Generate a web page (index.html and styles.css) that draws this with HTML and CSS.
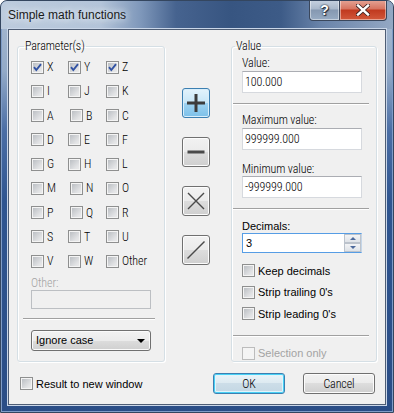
FILE: index.html
```html
<!DOCTYPE html>
<html lang="en">
<head>
    <meta charset="UTF-8">
    <title>Simple math functions</title>
    <link rel="stylesheet" href="styles.css">
</head>
<body>
<div class="window">
    <div class="titlebar">
        <span class="title">Simple math functions</span>
        <div class="caption-buttons">
            <div class="cap-btn help">?</div>
            <div class="cap-btn close">
                <svg width="14" height="12" viewBox="0 0 14 12">
                    <path d="M2 1.5 L12 10.5 M12 1.5 L2 10.5" stroke="#3a2020" stroke-width="4" stroke-linecap="square"/>
                    <path d="M2 1.5 L12 10.5 M12 1.5 L2 10.5" stroke="#fff" stroke-width="2.4" stroke-linecap="square"/>
                </svg>
            </div>
        </div>
    </div>

    <div class="client">
        <div class="main">
            <!-- parameters -->
            <fieldset class="group params">
                <legend>Parameter(s)</legend>
                <div class="letters">
                    <label class="check"><span class="box on"><svg viewBox="0 0 11 11"><path d="M2 5.2 L4.3 8 L9 2.2" /></svg></span>X</label>
                    <label class="check"><span class="box on"><svg viewBox="0 0 11 11"><path d="M2 5.2 L4.3 8 L9 2.2" /></svg></span>Y</label>
                    <label class="check"><span class="box on"><svg viewBox="0 0 11 11"><path d="M2 5.2 L4.3 8 L9 2.2" /></svg></span>Z</label>
                    <label class="check"><span class="box"></span>I</label>
                    <label class="check"><span class="box"></span>J</label>
                    <label class="check"><span class="box"></span>K</label>
                    <label class="check"><span class="box"></span>A</label>
                    <label class="check shift"><span class="box"></span>B</label>
                    <label class="check"><span class="box"></span>C</label>
                    <label class="check"><span class="box"></span>D</label>
                    <label class="check"><span class="box"></span>E</label>
                    <label class="check"><span class="box"></span>F</label>
                    <label class="check"><span class="box"></span>G</label>
                    <label class="check"><span class="box"></span>H</label>
                    <label class="check"><span class="box"></span>L</label>
                    <label class="check"><span class="box"></span>M</label>
                    <label class="check shift"><span class="box"></span>N</label>
                    <label class="check"><span class="box"></span>O</label>
                    <label class="check"><span class="box"></span>P</label>
                    <label class="check shift"><span class="box"></span>Q</label>
                    <label class="check"><span class="box"></span>R</label>
                    <label class="check"><span class="box"></span>S</label>
                    <label class="check"><span class="box"></span>T</label>
                    <label class="check"><span class="box"></span>U</label>
                    <label class="check"><span class="box"></span>V</label>
                    <label class="check"><span class="box"></span>W</label>
                    <label class="check"><span class="box"></span>Other</label>
                </div>
                <div class="other-label">Other:</div>
                <div class="field disabled other-field"></div>
                <div class="sep left-sep"></div>
                <div class="combo">Ignore case<span class="arrow"></span></div>
            </fieldset>

            <!-- operations -->
            <div class="ops">
                <button class="op hot">
                    <svg width="18" height="18" viewBox="0 0 18 18"><path d="M9 0 V18 M0 9 H18" stroke="#3c3c3c" stroke-width="3"/></svg>
                </button>
                <button class="op">
                    <svg width="18" height="18" viewBox="0 0 18 18"><path d="M0.5 9 H17.5" stroke="#4a4a4a" stroke-width="3"/></svg>
                </button>
                <button class="op">
                    <svg width="18" height="18" viewBox="0 0 18 18"><path d="M1 1 L17 17 M17 1 L1 17" stroke="#4a4a4a" stroke-width="1.4"/></svg>
                </button>
                <button class="op">
                    <svg width="18" height="18" viewBox="0 0 18 18"><path d="M0.5 17.5 L17.5 0.5" stroke="#4a4a4a" stroke-width="1.4"/></svg>
                </button>
            </div>

            <!-- value -->
            <fieldset class="group value">
                <legend>Value</legend>
                <div class="lbl first">Value:</div>
                <div class="field">100.000</div>
                <div class="sep"></div>
                <div class="lbl max">Maximum value:</div>
                <div class="field">999999.000</div>
                <div class="lbl min">Minimum value:</div>
                <div class="field">-999999.000</div>
                <div class="sep"></div>
                <div class="lbl2">Decimals:</div>
                <div class="spinner">
                    <span class="spin-text">3</span>
                    <span class="spin">
                        <span class="spin-btn"><span class="tri up"></span></span>
                        <span class="spin-btn"><span class="tri down"></span></span>
                    </span>
                </div>
                <div class="opts">
                    <label class="check wide"><span class="box"></span>Keep decimals</label>
                    <label class="check wide"><span class="box"></span>Strip trailing 0's</label>
                    <label class="check wide"><span class="box"></span>Strip leading 0's</label>
                </div>
                <div class="sep"></div>
                <label class="check wide disabled sel"><span class="box"></span>Selection only</label>
            </fieldset>
        </div>

        <div class="footer">
            <label class="check wide"><span class="box"></span>Result to new window</label>
            <button class="btn default">OK</button>
            <button class="btn">Cancel</button>
        </div>
    </div>
</div>
</body>
</html>
```

FILE: styles.css
```css
* {
    box-sizing: border-box;
}

body {
    margin: 0;
    background: #fff;
    font-family: "Liberation Sans", Arial, sans-serif;
    font-size: 11px;
    color: #000;
}

.window {
    width: 394px;
    height: 413px;
    border: 1px solid #34465f;
    border-radius: 7px 7px 0 0;
    padding: 0 7px 7px 7px;
    display: flex;
    flex-direction: column;
    overflow: hidden;
    background: linear-gradient(180deg, #a9bbd2 0, #93aac7 70px, #4b6ea5 130px, #2f5590 200px, #2a4d86 413px);
    box-shadow: inset 1px 0 0 #7f9cc7, inset -1px 0 0 #7f9cc7, inset 0 -1px 0 #7f9cc7;
}

/* title bar */
.titlebar {
    height: 28px;
    margin: 0 -7px;
    padding: 0 6px 0 7px;
    display: flex;
    justify-content: space-between;
    align-items: flex-start;
    background: linear-gradient(90deg, #bccbdd 0, #b3c4d9 100px, #7e97ba 140px, #46638f 175px, #375581 230px, #3d5b87 280px, #6a84aa 320px, #95a9c4 394px);
    border-radius: 6px 6px 0 0;
}

.title {
    font-size: 12px;
    line-height: 14px;
    margin-top: 7px;
    color: #1a1a1a;
    text-shadow: 0 0 6px #e8eef6, 0 0 10px #e8eef6;
}

.caption-buttons {
    display: flex;
    margin-top: -1px;
}

.cap-btn {
    height: 21px;
    border: 1px solid #3a475c;
    border-top: none;
    display: flex;
    align-items: center;
    justify-content: center;
    box-shadow: inset 0 0 0 1px rgba(255, 255, 255, 0.45);
}

.help {
    width: 30px;
    border-radius: 0 0 0 4px;
    border-right: none;
    background: linear-gradient(180deg, #c7d2e0 0, #a9b8cb 45%, #8598b1 50%, #97abc3 100%);
    color: #fff;
    font-weight: bold;
    font-size: 14px;
    text-shadow: 0 0 1px #202a38, 0 0 2px #202a38, 1px 1px 1px #202a38;
}

.close {
    width: 48px;
    border-radius: 0 0 4px 0;
    background: linear-gradient(180deg, #e5a597 0, #d7735f 45%, #c0391f 50%, #d2583b 100%);
}

/* client area */
.client {
    flex: 1;
    background: #f0f0f0;
    border: 1px solid #4e5d74;
    box-shadow: 0 0 0 1px #c9d6e8;
    display: flex;
    flex-direction: column;
}

.main {
    display: flex;
    padding: 9px 0 0 8px;
}

.group {
    margin: 0;
    padding: 0;
    min-width: 0;
    height: 323px;
    border: 1px solid #d5dfe5;
    border-radius: 3px;
    box-shadow: inset 1px 1px 0 #fff, 1px 1px 0 #fff;
}

.group legend,
.check,
.other-label,
.field,
.lbl,
.btn {
    font-family: Roboto, "DejaVu Sans Condensed", sans-serif;
    font-stretch: 75%;
    font-weight: 300;
    font-size: 12px;
    letter-spacing: -0.1px;
}

.group legend {
    padding: 0 1px;
    line-height: 14px;
}

.params {
    width: 148px;
}

.params legend {
    margin-left: 6px;
}

.value {
    width: 146px;
}

.value legend {
    margin-left: 3px;
}

/* checkboxes */
.check {
    display: flex;
    align-items: center;
    gap: 3px;
    line-height: 14px;
}

.check.wide {
    font-family: "Liberation Sans", Arial, sans-serif;
    font-stretch: normal;
    font-weight: normal;
    font-size: 11px;
    letter-spacing: 0;
}

.check.shift {
    padding-left: 2px;
}

.box {
    width: 13px;
    height: 13px;
    flex: none;
    border: 1px solid #8e8f8f;
    background: linear-gradient(135deg, #b6babf 0, #e2e3e5 70%, #ededed 100%);
    box-shadow: inset 0 0 0 1px #f4f4f4;
    display: flex;
}

.box svg {
    width: 11px;
    height: 11px;
}

.box svg path {
    fill: none;
    stroke: #3152a3;
    stroke-width: 1.9;
}

.check.disabled {
    color: #a3a3a3;
}

.check.disabled .box {
    border-color: #bcbcbc;
    background: #f4f4f4;
}

.letters {
    display: grid;
    grid-template-columns: 37px 38px auto;
    grid-auto-rows: 24.25px;
    align-items: center;
    padding-left: 13px;
    margin-top: 2px;
}

.other-label {
    line-height: 14px;
    color: #a3a3a3;
    margin: 3px 0 0 13px;
}

/* text fields */
.field {
    width: 120px;
    height: 22px;
    margin-left: 10px;
    border: 1px solid #d6d9de;
    border-top-color: #abadb3;
    background: #fff;
    padding-left: 2px;
    line-height: 20px;
}

.field.disabled {
    background: #f0f0f0;
    border-color: #bcbfc3;
}

.other-field {
    height: 19px;
    margin-left: 13px;
}

.sep {
    height: 2px;
    width: 136px;
    margin: 10px 0 0 1px;
    border-top: 1px solid #a0a0a0;
    border-bottom: 1px solid #fff;
}

.left-sep {
    width: 132px;
    margin: 9px 0 0 5px;
}

.combo {
    width: 120px;
    height: 21px;
    margin: 10px 0 0 13px;
    border: 1px solid #707070;
    border-radius: 3px;
    background: linear-gradient(180deg, #f2f2f2 0, #ebebeb 50%, #dddddd 50%, #cfcfcf 100%);
    box-shadow: inset 0 0 0 1px #fafafa;
    padding-left: 4px;
    line-height: 19px;
    display: flex;
    justify-content: space-between;
    align-items: center;
}

.arrow {
    width: 0;
    height: 0;
    margin-right: 5px;
    border-left: 4px solid transparent;
    border-right: 4px solid transparent;
    border-top: 4px solid #000;
}

/* operation buttons */
.ops {
    width: 66px;
    padding: 49px 0 0 17px;
    display: flex;
    flex-direction: column;
    gap: 19px;
}

.op {
    width: 28px;
    height: 30px;
    padding: 0;
    border: 1px solid #707070;
    border-radius: 3px;
    background: linear-gradient(180deg, #f2f2f2 0, #ebebeb 50%, #dddddd 50%, #cfcfcf 100%);
    box-shadow: inset 0 0 0 1px #fcfcfc;
    display: flex;
    align-items: center;
    justify-content: center;
}

.op.hot {
    border-color: #3c7fb1;
    background: linear-gradient(180deg, #e3f3fc 0, #c7e6f7 50%, #9fd3f1 50%, #7cc0e9 100%);
    box-shadow: inset 0 0 0 1px #d8eefb;
}

/* value group */
.lbl {
    line-height: 14px;
    margin-left: 10px;
}

.lbl.first {
    margin-top: 3px;
}

.lbl.max {
    margin-top: 8px;
}

.lbl.min {
    margin-top: 12px;
}

.lbl + .field {
    margin-top: 1px;
}

.lbl.min + .field {
    margin-top: 0;
}

.lbl2 {
    margin: 10px 0 0 10px;
    line-height: 13px;
}

.spinner {
    width: 120px;
    height: 20px;
    margin-left: 10px;
    border: 1px solid #569de5;
    border-right-color: #c5d6e8;
    background: #fff;
    display: flex;
    justify-content: space-between;
}

.spin-text {
    padding-left: 3px;
    line-height: 18px;
}

.spin {
    width: 17px;
    display: flex;
    flex-direction: column;
}

.spin-btn {
    flex: 1;
    border: 1px solid #bcc3cc;
    background: linear-gradient(180deg, #f3f4f6, #dfe3e8);
    display: flex;
    align-items: center;
    justify-content: center;
}

.tri {
    width: 0;
    height: 0;
    border-left: 3px solid transparent;
    border-right: 3px solid transparent;
}

.tri.up {
    border-bottom: 3px solid #4d6a9c;
}

.tri.down {
    border-top: 3px solid #4d6a9c;
}

.opts {
    margin-top: 7px;
    margin-left: 10px;
}

.opts .check {
    height: 21.5px;
}

.sel {
    margin: 6px 0 0 10px;
    height: 21.5px;
}

/* footer */
.footer {
    display: flex;
    align-items: center;
    padding: 0 10px 0 11px;
    margin-top: 11px;
    gap: 18px;
}

.footer .check {
    margin-right: auto;
}

.btn {
    width: 72px;
    height: 21px;
    padding: 0;
    border: 1px solid #707070;
    border-radius: 3px;
    background: linear-gradient(180deg, #f2f2f2 0, #ebebeb 50%, #dddddd 50%, #cfcfcf 100%);
    box-shadow: inset 0 0 0 1px #fcfcfc;
    color: #000;
}

.btn.default {
    border-color: #3c7fb1;
    background: linear-gradient(180deg, #eaf4f9 0, #dce9f0 50%, #ccdde8 50%, #c3d7e3 100%);
    box-shadow: inset 0 0 0 1px #48d0f5, inset 0 0 0 2px #e0f4fb;
}
```
